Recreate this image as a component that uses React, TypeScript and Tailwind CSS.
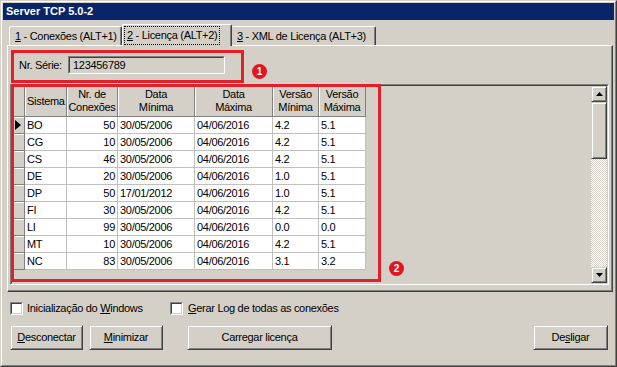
import React from 'react';

type Row = [string, string, string, string, string, string];

const rows: Row[] = [
  ['BO', '50', '30/05/2006', '04/06/2016', '4.2', '5.1'],
  ['CG', '10', '30/05/2006', '04/06/2016', '4.2', '5.1'],
  ['CS', '46', '30/05/2006', '04/06/2016', '4.2', '5.1'],
  ['DE', '20', '30/05/2006', '04/06/2016', '1.0', '5.1'],
  ['DP', '50', '17/01/2012', '04/06/2016', '1.0', '5.1'],
  ['FI', '30', '30/05/2006', '04/06/2016', '4.2', '5.1'],
  ['LI', '99', '30/05/2006', '04/06/2016', '0.0', '0.0'],
  ['MT', '10', '30/05/2006', '04/06/2016', '4.2', '5.1'],
  ['NC', '83', '30/05/2006', '04/06/2016', '3.1', '3.2'],
];

const cols = [
  { w: 'w-[42px]', head: ['Sistema'], left: true },
  { w: 'w-[51px]', head: ['Nr. de', 'Conexões'] },
  { w: 'w-[77px]', head: ['Data', 'Mínima'] },
  { w: 'w-[78px]', head: ['Data', 'Máxima'] },
  { w: 'w-[46px]', head: ['Versão', 'Mínima'] },
  { w: 'w-[47px]', head: ['Versão', 'Máxima'] },
];

const raised =
  'border border-t-[#d4d0c8] border-l-[#d4d0c8] border-r-[#404040] border-b-[#404040] shadow-[inset_1px_1px_0_#ffffff,inset_-1px_-1px_0_#808080]';

const fixedCell =
  'bg-[#d4d0c8] border-r border-b border-[#808080] shadow-[inset_1px_1px_0_#ffffff]';

function Sunken({ className, children }: { className: string; children?: React.ReactNode }) {
  return (
    <div className={`border border-t-[#808080] border-l-[#808080] border-r-white border-b-white ${className}`}>
      <div className="h-full w-full border border-t-[#404040] border-l-[#404040] border-r-[#d4d0c8] border-b-[#d4d0c8]">
        {children}
      </div>
    </div>
  );
}

function Arrow({ down }: { down?: boolean }) {
  return (
    <svg width="7" height="4" viewBox="0 0 7 4">
      <polygon points={down ? '0,0 7,0 3.5,4' : '3.5,0 7,4 0,4'} fill="#000" />
    </svg>
  );
}

function Badge({ n, className }: { n: string; className: string }) {
  return (
    <div
      className={`absolute flex h-[15px] w-[15px] items-center justify-center rounded-full bg-[#e3151f] text-[10px] font-bold leading-none text-white ${className}`}
    >
      {n}
    </div>
  );
}

function Button({ children, className }: { children: React.ReactNode; className: string }) {
  return (
    <div className={`flex h-[25px] items-center justify-center ${raised} ${className}`}>{children}</div>
  );
}

export default function App() {
  return (
    <div className="relative h-[367px] w-[617px] overflow-hidden whitespace-nowrap font-['Liberation_Sans',Arial,sans-serif] text-[11px] tracking-[-0.3px] text-black">
      <div className="h-full border border-t-[#d4d0c8] border-l-[#d4d0c8] border-r-[#404040] border-b-[#404040] bg-[#d4d0c8]">
        <div className="flex h-full flex-col border border-t-white border-l-white border-r-[#808080] border-b-[#808080] p-px">
          <div className="flex h-[17px] items-center bg-[#0a246a] pl-[3px] text-[11px] font-bold tracking-normal text-white">
            Server TCP 5.0-2
          </div>

          <div className="flex flex-col px-[4px]">
            {/* tabs */}
            <div className="mt-[4px] flex h-[21px] items-end pl-[2px]">
              <div className="flex h-[19px] w-[113px] items-center rounded-t-[2px] border-t border-l border-r border-t-white border-l-white border-r-[#404040] pl-[5px] shadow-[inset_-1px_0_0_#808080]">
                <span><span className="underline">1</span> - Conexões (ALT+1)</span>
              </div>
              <div className="relative z-10 -mb-px flex h-[22px] w-[110px] items-start rounded-t-[2px] border-t border-l border-r border-t-white border-l-white border-r-[#404040] bg-[#d4d0c8] pt-[2px] pl-[2px] shadow-[inset_-1px_0_0_#808080]">
                <span className="flex h-[17px] items-center px-[2px] outline-1 outline-dotted outline-black">
                  <span className="underline">2</span>&nbsp;- Licença (ALT+2)
                </span>
              </div>
              <div className="flex h-[19px] w-[144px] items-center rounded-t-[2px] border-t border-r border-t-white border-r-[#404040] pl-[5px] shadow-[inset_-1px_0_0_#808080]">
                <span><span className="underline">3</span> - XML de Licença (ALT+3)</span>
              </div>
            </div>

            {/* panel */}
            <div className="flex h-[247px] w-[606px] flex-col border-t border-l border-r border-b border-t-white border-l-white border-r-[#404040] border-b-[#404040] shadow-[inset_-1px_-1px_0_#808080]">
              <div className="mt-[10px] ml-[11px] flex items-center">
                <span className="w-[49px]">Nr. Série:</span>
                <Sunken className="h-[18px] w-[157px]">
                  <div className="flex h-full items-center pl-[3px]">123456789</div>
                </Sunken>
              </div>

              <Sunken className="mt-[10px] ml-[2px] h-[201px] w-[599px]">
                <div className="flex h-full">
                  <div className="flex flex-1 flex-col">
                    <div className="flex h-[31px]">
                      <div className={`h-full w-[13px] ${fixedCell}`} />
                      {cols.map((c) => (
                        <div
                          key={c.head.join()}
                          className={`flex h-full flex-col justify-center leading-[13px] ${c.w} ${fixedCell} ${c.left ? 'items-start pl-[2px]' : 'items-center'}`}
                        >
                          {c.head.map((h) => (
                            <span key={h}>{h}</span>
                          ))}
                        </div>
                      ))}
                    </div>
                    {rows.map((r, i) => (
                      <div key={r[0]} className="flex h-[17px]">
                        <div className={`flex h-full w-[13px] items-center justify-center ${fixedCell}`}>
                          {i === 0 && (
                            <svg width="6" height="10" viewBox="0 0 6 10">
                              <polygon points="0,0 6,5 0,10" fill="#000" />
                            </svg>
                          )}
                        </div>
                        {r.map((v, j) => (
                          <div
                            key={j}
                            className={`flex h-full items-center border-r border-b border-[#c0c0c0] bg-white ${cols[j].w} ${j === 1 ? 'justify-end pr-[2px]' : 'pl-[2px]'}`}
                          >
                            {v}
                          </div>
                        ))}
                      </div>
                    ))}
                  </div>

                  {/* scrollbar */}
                  <div className="flex h-full w-[16px] flex-col">
                    <div className={`flex h-[16px] items-center justify-center ${raised}`}>
                      <Arrow />
                    </div>
                    <div className={`h-[57px] ${raised}`} />
                    <div className="flex-1 bg-[repeating-conic-gradient(#ffffff_0_25%,#d4d0c8_0_50%)] bg-[length:2px_2px]" />
                    <div className={`flex h-[16px] items-center justify-center ${raised}`}>
                      <Arrow down />
                    </div>
                  </div>
                </div>
              </Sunken>
            </div>

            {/* options */}
            <div className="mt-[9px] flex h-[14px] items-center pl-[3px]">
              <div className="flex w-[160px] items-center gap-[4px]">
                <Sunken className="h-[13px] w-[13px]">
                  <div className="h-full w-full bg-white" />
                </Sunken>
                <span>
                  Inicialização do <span className="underline">W</span>indows
                </span>
              </div>
              <div className="flex items-center gap-[5px]">
                <Sunken className="h-[13px] w-[13px]">
                  <div className="h-full w-full bg-white" />
                </Sunken>
                <span>
                  <span className="underline">G</span>erar Log de todas as conexões
                </span>
              </div>
            </div>

            {/* buttons */}
            <div className="mt-[10px] flex pl-[3px] pr-[2px]">
              <Button className="w-[73px]">
                <span><span className="underline">D</span>esconectar</span>
              </Button>
              <Button className="ml-[6px] w-[74px]">
                <span><span className="underline">M</span>inimizar</span>
              </Button>
              <Button className="ml-[24px] w-[145px]">Carregar licença</Button>
              <Button className="ml-auto w-[75px]">
                <span>De<span className="underline">s</span>ligar</span>
              </Button>
            </div>
          </div>
        </div>
      </div>

      {/* annotations */}
      <div className="pointer-events-none absolute top-[50px] left-[11px] h-[33px] w-[233px] border-[3px] border-[#e3202a]" />
      <div className="pointer-events-none absolute top-[84px] left-[11px] h-[198px] w-[370px] border-[3px] border-[#e3202a]" />
      <Badge n="1" className="top-[64px] left-[252px]" />
      <Badge n="2" className="top-[261px] left-[389px]" />
    </div>
  );
}
